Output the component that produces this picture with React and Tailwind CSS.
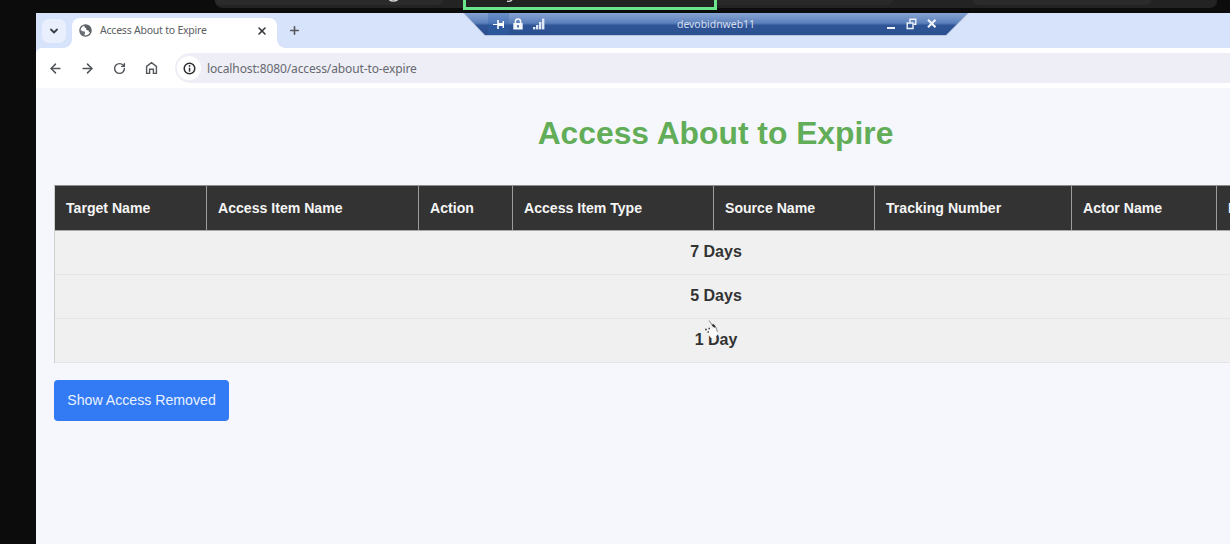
import React from "react";
import { ArrowLeft, ArrowRight, RotateCw, X, Plus, ChevronDown } from "lucide-react";

const columns = [
  { label: "Target Name", width: "w-[152px]" },
  { label: "Access Item Name", width: "w-[212px]" },
  { label: "Action", width: "w-[94px]" },
  { label: "Access Item Type", width: "w-[201px]" },
  { label: "Source Name", width: "w-[161px]" },
  { label: "Tracking Number", width: "w-[197px]" },
  { label: "Actor Name", width: "w-[145px]" },
  { label: "Expiration", width: "w-[160px]" },
];

const groups = ["7 Days", "5 Days", "1 Day"];

function Globe() {
  return (
    <svg className="h-[13px] w-[13px]" viewBox="0 0 13 13">
      <circle cx="6.5" cy="6.5" r="5.6" fill="#fff" stroke="#5a5e64" strokeWidth="1.3" />
      <path d="M1 5.5 L3.6 7.2 L5.8 7.4 L6 9.3 L5 12 C2.5 11.5 .8 9 1 5.5Z" fill="#6a6e74" />
      <path d="M5.2 1 L5.6 3.2 L7.2 4.2 L7.4 6 L9.6 6.4 L10 8.4 L12 7.5 C12.5 3.5 9 .4 5.2 1Z" fill="#5a5e64" />
    </svg>
  );
}

function HomeIcon() {
  return (
    <svg className="h-[14px] w-[13px]" viewBox="0 0 13 14" fill="none" stroke="#55585d" strokeWidth="1.4">
      <path d="M1.6 5.4 L6.5 1.6 L11.4 5.4 V12.4 H8.4 V8.3 H4.6 V12.4 H1.6Z" />
    </svg>
  );
}

function TopStrip() {
  return (
    <div className="relative h-[13px] w-full overflow-hidden bg-[#0c0c0c]">
      <div className="ml-[215px] h-[8px] w-[1002px] rounded-b-[7px] bg-[#232323]">
        <div className="flex h-[5px] justify-between">
          <div className="w-[228px] rounded-b-[5px] bg-[#2b2b2b]" />
          <div className="ml-[120px] w-[250px] rounded-b-[5px] bg-[#292929]" />
          <div className="mr-[66px] w-[178px] rounded-b-[5px] bg-[#2b2b2b]" />
        </div>
      </div>
      <div className="absolute left-[463px] top-[-20px] h-[30px] w-[254px] border-[3px] border-[#6ae58c] bg-[#222222]" />
      <svg className="absolute left-[386px] top-0 h-[4px] w-[130px]" viewBox="0 0 130 4" fill="none">
        <path d="M3.5 0 Q7 2 11.5 0" stroke="#d4d6da" strokeWidth="1.6" />
        <path d="M121 1.2 Q124 1.8 126 0" stroke="#d4d6da" strokeWidth="1.4" />
      </svg>
    </div>
  );
}

function RemoteBar() {
  return (
    <div className="absolute left-[463px] top-[13px] h-[23px] w-[506px] bg-[#b9c4da] [clip-path:polygon(0_0,100%_0,483px_100%,22px_100%)]">
      <div className="flex h-[22px] w-full items-center bg-[linear-gradient(#86a4d2_0%,#6b8dc4_30%,#5a7fba_46%,#2f5596_56%,#2b5091_100%)] [clip-path:polygon(1px_0,505px_0,483px_100%,22px_100%)]">
        <div className="ml-[25px] flex h-full w-[21px] items-center justify-center bg-[#2f62b0]/30">
          <svg className="h-[11px] w-[13px]" viewBox="0 0 13 11" stroke="#fff" fill="none">
            <path d="M1 5.5H6" strokeWidth="1.2" />
            <path d="M6 1V10" strokeWidth="1.6" />
            <path d="M6 5.5H11" strokeWidth="3" />
            <path d="M11.3 2V9" strokeWidth="1.4" />
          </svg>
        </div>
        <svg className="ml-[4px] h-[12px] w-[10px]" viewBox="0 0 10 12">
          <path d="M2.4 5.5V3.6A2.6 2.6 0 0 1 7.6 3.6V5.5" fill="none" stroke="#f4f7fc" strokeWidth="1.5" />
          <rect x="0.3" y="5" width="9.4" height="6.6" rx=".5" fill="#f4f7fc" />
          <rect x="4.2" y="7" width="1.6" height="2.6" fill="#3c5f9c" />
        </svg>
        <svg className="ml-[10px] h-[12px] w-[12px]" viewBox="0 0 12 12" fill="#dfe7f4">
          <rect x="0" y="9" width="2.4" height="2.4" />
          <rect x="3" y="7" width="2.4" height="4.4" />
          <rect x="6" y="4" width="2.4" height="7.4" />
          <rect x="9" y="0.6" width="2.4" height="10.8" />
        </svg>
        <span className="ml-[132px] w-[80px] whitespace-nowrap pt-[1px] font-['Noto_Sans',sans-serif] text-[10.5px] tracking-[-0.05px] text-[#d5deee]">
          devobidnweb11
        </span>
        <svg className="ml-[129px] h-[12px] w-[54px]" viewBox="0 0 54 12" fill="none" stroke="#eef2fa">
          <path d="M1 10H9" strokeWidth="2.2" />
          <path d="M24 4.4V1.2H29.8V6.2H27.5" strokeWidth="1.4" />
          <path d="M21.2 5H27V10.5H21.2Z" strokeWidth="1.4" />
          <path d="M42 1.8L49.5 9.2M49.5 1.8L42 9.2" strokeWidth="2.2" />
        </svg>
      </div>
    </div>
  );
}

function TabStrip() {
  return (
    <div className="flex h-[35px] items-start bg-[#d7e2fb] pl-[6px] pt-[5px]">
      <div className="mt-[1px] flex h-[24px] w-[24px] items-center justify-center rounded-[7px] bg-[#e9effd]">
        <ChevronDown size={12} strokeWidth={3.6} color="#3a3d42" />
      </div>
      <div className="ml-[-2px] flex h-[30px] items-end">
        <div className="h-[8px] w-[8px] bg-[radial-gradient(circle_at_0_0,#d7e2fb_7.5px,#ffffff_8px)]" />
        <div className="flex h-[30px] w-[205px] items-center rounded-t-[8px] bg-white pb-[5px] pl-[7px]">
          <Globe />
          <span className="ml-[8px] w-[149px] whitespace-nowrap pt-[1px] font-['Noto_Sans',sans-serif] text-[10.5px] tracking-[-0.22px] text-[#5a5d62]">
            Access About to Expire
          </span>
          <X className="ml-[7px]" size={12} strokeWidth={3.2} color="#36393d" />
        </div>
        <div className="h-[8px] w-[8px] bg-[radial-gradient(circle_at_100%_0,#d7e2fb_7.5px,#ffffff_8px)]" />
      </div>
      <Plus className="ml-[3px] mt-[6px]" size={13} strokeWidth={3} color="#55585d" />
    </div>
  );
}

function Toolbar() {
  return (
    <div className="bg-[#d7e2fb]">
      <div className="flex h-[40px] items-center rounded-tl-[6px] bg-white pl-[12px]">
        <ArrowLeft size={15} strokeWidth={2.3} color="#505358" />
        <ArrowRight className="ml-[17px]" size={15} strokeWidth={2.3} color="#505358" />
        <RotateCw className="ml-[18px]" size={13} strokeWidth={2.6} color="#505358" />
        <div className="ml-[19px]">
          <HomeIcon />
        </div>
        <div className="ml-[17px] flex h-[30px] grow items-center rounded-l-full bg-[#eeeef6] pl-[2px]">
          <div className="flex h-[24px] w-[24px] items-center justify-center rounded-full bg-white">
            <svg className="h-[13px] w-[13px]" viewBox="0 0 13 13">
              <circle cx="6.5" cy="6.5" r="5.3" fill="none" stroke="#2c2e31" strokeWidth="1.5" />
              <rect x="5.8" y="5.7" width="1.5" height="4" fill="#2c2e31" />
              <rect x="5.8" y="3.1" width="1.5" height="1.6" fill="#2c2e31" />
            </svg>
          </div>
          <span className="ml-[6px] whitespace-nowrap pt-[2px] font-['Noto_Sans',sans-serif] text-[12px] tracking-[-0.12px] text-[#66696f]">
            localhost:8080/access/about-to-expire
          </span>
        </div>
      </div>
    </div>
  );
}

function AccessTable() {
  return (
    <div className="mt-[32px] border-l border-t border-[#8d8d8d] border-l-[#cfcfcf]">
      <div className="flex h-[45px] border-b border-[#a8a8a8] bg-[#333333]">
        {columns.map((c) => (
          <div
            key={c.label}
            className={`${c.width} flex shrink-0 items-center border-r border-[#9c9c9c] pl-[11px] pt-[2px] text-[14.1px] font-bold whitespace-nowrap text-[#f5f5f5]`}
          >
            {c.label}
          </div>
        ))}
      </div>
      {groups.map((g) => (
        <div
          key={g}
          className="flex h-[44px] items-center justify-center border-b border-[#e5e5e7] bg-[#f0f0f0] pb-[2px] text-[16px] font-bold text-[#333333]"
        >
          {g}
        </div>
      ))}
    </div>
  );
}

function Cursor() {
  return (
    <svg className="absolute left-[703px] top-[319px] h-[22px] w-[18px]" viewBox="0 0 18 22">
      <path d="M5.5 11L8 9L10 10L12 8L15 11.5V15L12 19H8L5 15Z" fill="#fbfbfb" />
      <path d="M6 1.5L10 7L13 8.5L14.5 13" fill="none" stroke="#999" strokeWidth="1.1" />
      <path d="M9.5 5.5L12 8" stroke="#333" strokeWidth="2" />
      <path d="M2 10.5H3.8M4.5 13H6M5.5 9.5H7" stroke="#444" strokeWidth="1.5" />
    </svg>
  );
}

export default function App() {
  return (
    <div className="relative h-[544px] w-[1230px] overflow-hidden bg-[#0c0c0c] font-['Liberation_Sans',Arial,sans-serif]">
      <TopStrip />
      <div className="ml-[36px] flex h-[531px] flex-col overflow-hidden bg-[#f5f7fc]">
        <TabStrip />
        <Toolbar />
        <div className="ml-[18px] w-[1323px] pt-[26px]">
          <h1 className="h-[39px] text-center text-[31.8px] leading-[38px] font-bold text-[#62ad58]">Access About to Expire</h1>
          <AccessTable />
          <button className="mt-[17px] flex h-[41px] w-[175px] items-center justify-center rounded-[4px] bg-[#337af5] text-[14.15px] whitespace-nowrap text-[#e9f2ff]">
            Show Access Removed
          </button>
        </div>
      </div>
      <RemoteBar />
      <Cursor />
    </div>
  );
}
